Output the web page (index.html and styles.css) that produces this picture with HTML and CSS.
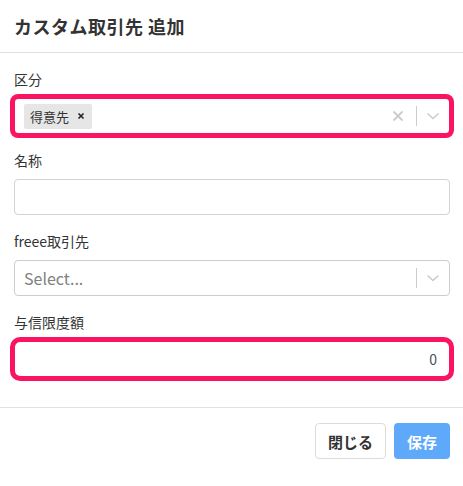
FILE: index.html
```html
<!DOCTYPE html>
<html lang="ja">
<head>
    <meta charset="UTF-8">
    <title>カスタム取引先 追加</title>
    <link rel="stylesheet" href="styles.css">
</head>
<body>
    <div class="modal">
        <div class="modal-header">
            <h5 class="modal-title">カスタム取引先 追加</h5>
        </div>
        <div class="modal-body">
            <div class="form-group">
                <label class="form-label">区分</label>
                <div class="select mark">
                    <div class="select-values">
                        <div class="chip">
                            <span class="chip-label">得意先</span>
                            <span class="chip-remove">
                                <svg width="8" height="8" viewBox="0 0 8 8"><path d="M1.5 1.5L6.5 6.5M6.5 1.5L1.5 6.5" stroke="#222" stroke-width="1.6"/></svg>
                            </span>
                        </div>
                    </div>
                    <div class="select-indicators">
                        <span class="indicator">
                            <svg width="12" height="12" viewBox="0 0 12 12"><path d="M1.5 1.5L10.5 10.5M10.5 1.5L1.5 10.5" stroke="#cccccc" stroke-width="1.8"/></svg>
                        </span>
                        <span class="separator"></span>
                        <span class="indicator">
                            <svg width="14" height="8" viewBox="0 0 14 8"><path d="M1.5 1.5L7 6.5L12.5 1.5" fill="none" stroke="#cccccc" stroke-width="1.6"/></svg>
                        </span>
                    </div>
                </div>
            </div>
            <div class="form-group">
                <label class="form-label">名称</label>
                <input class="form-control" type="text">
            </div>
            <div class="form-group">
                <label class="form-label">freee取引先</label>
                <div class="select">
                    <div class="select-values">
                        <span class="placeholder">Select...</span>
                    </div>
                    <div class="select-indicators">
                        <span class="separator"></span>
                        <span class="indicator">
                            <svg width="14" height="8" viewBox="0 0 14 8"><path d="M1.5 1.5L7 6.5L12.5 1.5" fill="none" stroke="#cccccc" stroke-width="1.6"/></svg>
                        </span>
                    </div>
                </div>
            </div>
            <div class="form-group">
                <label class="form-label">与信限度額</label>
                <input class="form-control number mark" type="text" value="0">
            </div>
        </div>
        <div class="modal-footer">
            <button class="btn btn-light">閉じる</button>
            <button class="btn btn-primary">保存</button>
        </div>
    </div>
</body>
</html>
```

FILE: styles.css
```css
*{
    box-sizing: border-box;
}
body{
    margin: 0;
    background: #fff;
    font-family: "Noto Sans CJK JP", "Noto Sans", sans-serif;
    color: #212529;
}
.modal{
    width: 463px;
}
.modal-header{
    height: 53px;
    padding: 0 14px;
    border-bottom: 1px solid #dee2e6;
    display: flex;
    align-items: center;
}
.modal-title{
    margin: 0;
    font-size: 18px;
    font-weight: 700;
    letter-spacing: 0.5px;
    color: #333;
    line-height: 1.5;
}
.modal-body{
    padding: 16px 13px 14px 14px;
}
.form-group{
    margin-bottom: 16px;
}
.form-label{
    display: block;
    font-size: 14px;
    line-height: 21px;
    margin-bottom: 8px;
    color: #333;
}
.form-control{
    display: block;
    width: 100%;
    height: 36px;
    padding: 0 12px;
    font-family: inherit;
    font-size: 14px;
    color: #495057;
    border: 1px solid #ced4da;
    border-radius: 4px;
    background: #fff;
}
.number{
    text-align: right;
}
/* 赤い強調枠 */
.mark{
    outline: 5px solid #fb1460;
    outline-offset: -1px;
    border-radius: 6px;
}
.select{
    height: 36px;
    display: flex;
    align-items: center;
    border: 1px solid #ccc;
    border-radius: 4px;
    background: #fff;
}
.select-values{
    flex: 1;
    display: flex;
    align-items: center;
    padding: 0 8px;
}
.placeholder{
    font-size: 16px;
    color: #808080;
    margin-left: 1px;
}
.chip{
    display: flex;
    align-items: center;
    height: 25px;
    margin-left: 1px;
    background: #e6e6e6;
    border-radius: 2px;
}
.chip-label{
    font-size: 13px;
    color: #333;
    padding: 0 5px 0 6px;
}
.chip-remove{
    display: flex;
    align-items: center;
    padding: 0 7px 0 3px;
}
.select-indicators{
    display: flex;
    align-items: center;
    height: 100%;
}
.indicator{
    display: flex;
    align-items: center;
    justify-content: center;
    padding: 0 9px;
}
.indicator:first-child{
    padding-right: 12px;
}
.separator{
    width: 1px;
    height: 20px;
    background: #ccc;
}
.modal-footer{
    border-top: 1px solid #dee2e6;
    padding: 15px 13px 0 0;
    display: flex;
    justify-content: flex-end;
    gap: 8px;
}
.btn{
    height: 36px;
    padding: 0 12px;
    font-family: inherit;
    font-size: 15px;
    font-weight: 700;
    border-radius: 4px;
    border: 1px solid transparent;
}
.btn-light{
    background: #fff;
    border-color: #dcdcdc;
    color: #333;
}
.btn-primary{
    background: #5ea9f9;
    color: #fff;
}
```
